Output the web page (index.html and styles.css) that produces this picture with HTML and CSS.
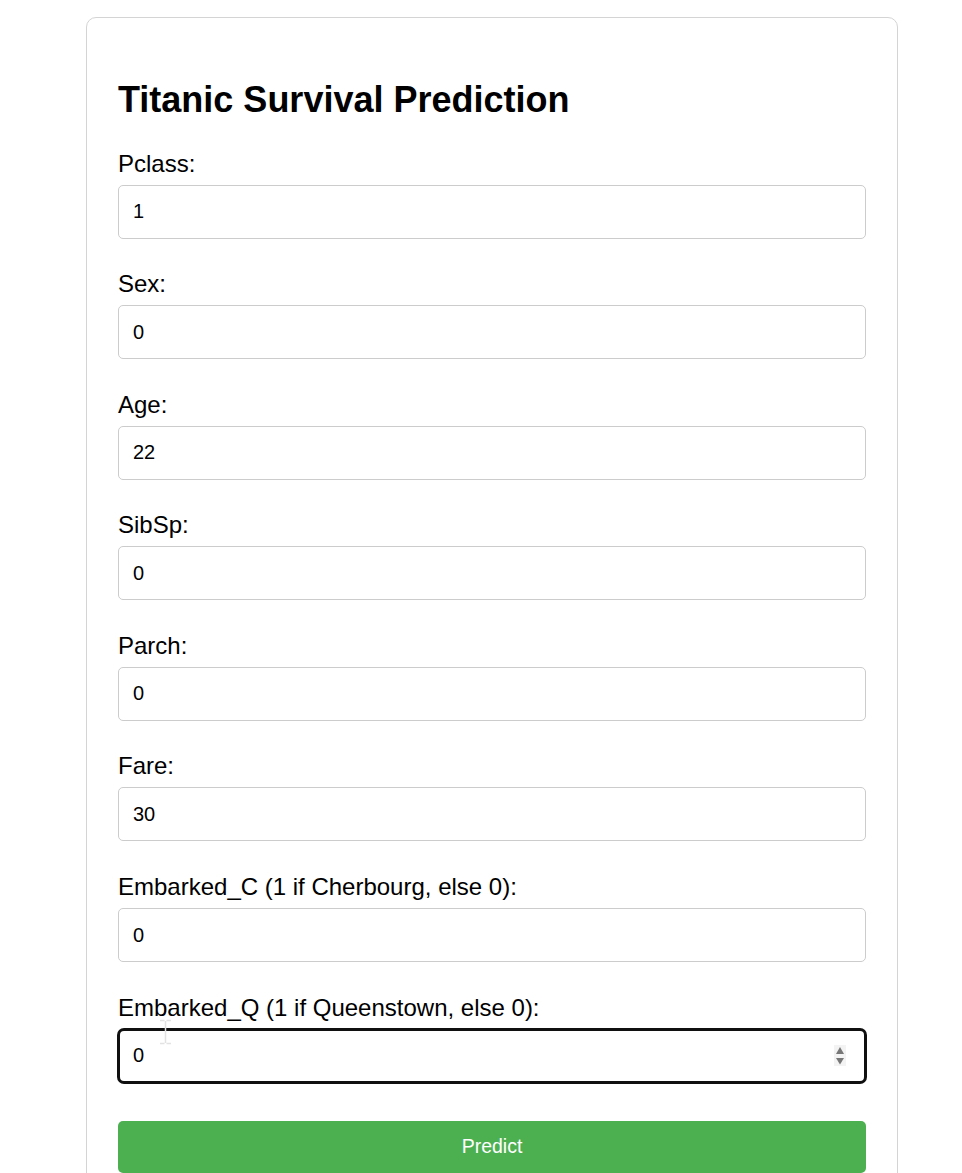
FILE: index.html
```html
<!DOCTYPE html>
<html lang="en">
<head>
<meta charset="utf-8">
<title>Titanic Survival Prediction</title>
<link rel="stylesheet" href="styles.css">
</head>
<body>
<div class="card">
  <h1 class="title">Titanic Survival Prediction</h1>
  <form class="form">
    <label class="label" for="pclass">Pclass:</label>
    <input class="input" id="pclass" type="text" value="1">
    <label class="label" for="sex">Sex:</label>
    <input class="input" id="sex" type="text" value="0">
    <label class="label" for="age">Age:</label>
    <input class="input" id="age" type="text" value="22">
    <label class="label" for="sibsp">SibSp:</label>
    <input class="input" id="sibsp" type="text" value="0">
    <label class="label" for="parch">Parch:</label>
    <input class="input" id="parch" type="text" value="0">
    <label class="label" for="fare">Fare:</label>
    <input class="input" id="fare" type="text" value="30">
    <label class="label" for="embc">Embarked_C (1 if Cherbourg, else 0):</label>
    <input class="input" id="embc" type="text" value="0">
    <label class="label" for="embq">Embarked_Q (1 if Queenstown, else 0):</label>
    <div class="input-wrap">
      <input class="input input-focused" id="embq" type="text" value="0">
      <svg class="spinner" width="12" height="21" viewBox="0 0 12 21" aria-hidden="true">
        <rect x="0" y="0" width="12" height="21" fill="#f3f3f3"/>
        <path d="M2 9 L6 2 L10 9 Z" fill="#777777"/>
        <path d="M2 13 L10 13 L6 19.5 Z" fill="#777777"/>
      </svg>
      <svg class="ibeam" width="13" height="26" viewBox="0 0 13 26" aria-hidden="true">
        <path d="M1 1.5 H5.5 M7.5 1.5 H12 M6.5 2 V24 M1 24.5 H5.5 M7.5 24.5 H12" stroke="#e2e2e2" stroke-width="1.5" fill="none"/>
      </svg>
    </div>
    <button class="button" type="button">Predict</button>
  </form>
</div>
</body>
</html>
```

FILE: styles.css
```css
html, body {
  margin: 0;
  padding: 0;
  background: #ffffff;
}

body {
  font-family: "Liberation Sans", Arial, sans-serif;
  color: #000;
}

.card {
  box-sizing: border-box;
  width: 812px;
  margin: 17px 0 0 86px;
  padding: 30px 31px 40px;
  border: 1px solid #d4d4d4;
  border-radius: 10px;
}

.title {
  font-size: 36px;
  font-weight: 700;
  line-height: normal;
  margin: 30.5px 0 29px;
}

.form {
  display: flex;
  flex-direction: column;
}

.label {
  display: block;
  font-size: 24px;
  line-height: 28px;
  margin-bottom: 7px;
}

.input {
  display: block;
  box-sizing: border-box;
  width: 100%;
  height: 54px;
  margin: 0 0 31.6px;
  padding: 0 14px;
  border: 1px solid #cccccc;
  border-radius: 5px;
  font-family: "Liberation Sans", Arial, sans-serif;
  font-size: 20px;
  color: #000;
  background: #fff;
  outline: none;
}

.input-wrap {
  position: relative;
}

.input-focused {
  border: 2px solid #101010;
  box-shadow: 0 0 0 1px #101010;
  border-radius: 6px;
  padding-left: 13px;
}

.spinner {
  position: absolute;
  left: 716px;
  top: 16px;
}

.ibeam {
  position: absolute;
  left: 41px;
  top: -10px;
}

.button {
  display: block;
  width: 100%;
  height: 52px;
  margin-top: 6.4px;
  border: none;
  border-radius: 5px;
  background: #4caf50;
  color: #ffffff;
  font-family: "Liberation Sans", Arial, sans-serif;
  font-size: 19.5px;
}
```
